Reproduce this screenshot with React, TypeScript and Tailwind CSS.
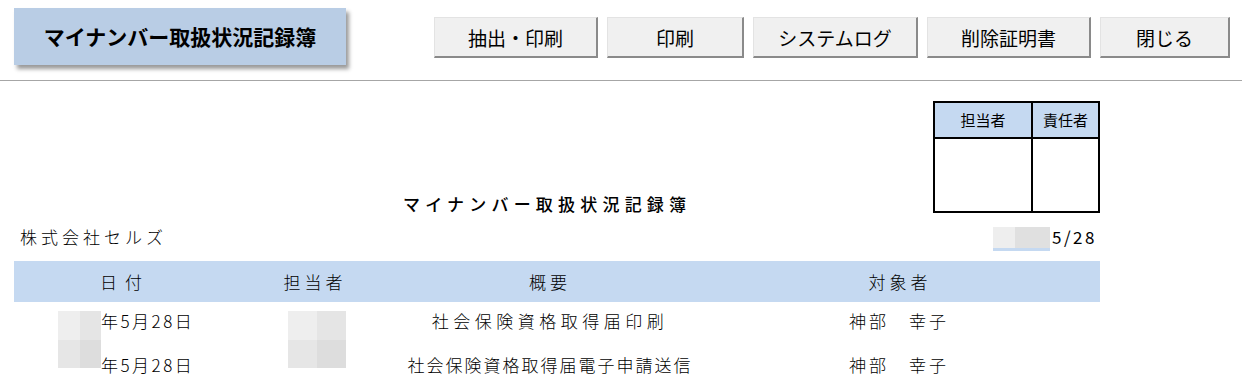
const jp = "font-['Noto_Sans_CJK_JP','Noto_Sans',sans-serif]";

const buttons = [
  { label: "抽出・印刷", w: "w-[164px]" },
  { label: "印刷", w: "w-[137px]" },
  { label: "システムログ", w: "w-[165px]" },
  { label: "削除証明書", w: "w-[164px]" },
  { label: "閉じる", w: "w-[130px]" },
];

const rows = [
  { summary: "社会保険資格取得届印刷", spacing: "tracking-[4.5px]", target: "神部　幸子" },
  { summary: "社会保険資格取得届電子申請送信", spacing: "tracking-[2px]", target: "神部　幸子" },
];

// pixelated block standing in for masked values, spans both rows
function Mosaic({ width }: { width: string }) {
  return (
    <div className={`row-span-2 mt-[12px] grid h-[57px] ${width} grid-cols-2 grid-rows-2 self-start`}>
      <div className="bg-[#eeeeee]" />
      <div className="bg-[#e5e5e5]" />
      <div className="bg-[#e6e6e6]" />
      <div className="bg-[#dddddd]" />
    </div>
  );
}

export default function App() {
  return (
    <div className={`h-[390px] w-[1242px] overflow-hidden bg-white text-black ${jp}`}>
      <header className="flex h-[81px] items-start border-b border-[#a6a6a6] pr-[12px]">
        <div className="ml-[14px] mt-[8px] flex h-[57px] w-[332px] items-center justify-center bg-[#b9cde5] text-[21px] font-bold shadow-[3px_4px_4px_rgba(0,0,0,0.4)]">
          マイナンバー取扱状況記録簿
        </div>
        <div className="ml-auto mt-[17px] flex gap-[9px]">
          {buttons.map((b) => (
            <button
              key={b.label}
              type="button"
              className={`${b.w} h-[41px] border border-t-[#e3e3e3] border-l-[#e3e3e3] border-r-[#8a8a8a] border-b-[#8a8a8a] border-r-2 border-b-2 bg-[#f0f0f0] text-[19px] leading-none`}
            >
              {b.label}
            </button>
          ))}
        </div>
      </header>

      <div className="w-[1100px]">
        <div className="mt-[20px] flex items-end">
          <div className="mb-[1px] pl-[403px] text-[17px] font-medium tracking-[5.2px] leading-none">
            マイナンバー取扱状況記録簿
          </div>
          <div className="ml-auto flex h-[112px] w-[167px] border-2 border-black">
            <div className="flex w-[98px] flex-col border-r-2 border-black">
              <div className="flex h-[36px] items-center justify-center border-b-2 border-black bg-[#c5d9f1] text-[15px]">
                担当者
              </div>
            </div>
            <div className="flex flex-1 flex-col">
              <div className="flex h-[36px] items-center justify-center border-b-2 border-black bg-[#c5d9f1] text-[15px]">
                責任者
              </div>
            </div>
          </div>
        </div>

        <div className="flex h-[48px] items-center pl-[20px] pr-[3px]">
          <span className="text-[17px] tracking-[4px] font-light">株式会社セルズ</span>
          <div className="ml-auto flex items-center">
            <div className="flex flex-col pt-[3px]">
              <div className="flex h-[21px]">
                <div className="w-[22px] bg-[#eeeeee]" />
                <div className="w-[35px] bg-[#e0e0e0]" />
              </div>
              <div className="h-[3px] w-[57px] bg-[#c5d9f1]" />
            </div>
            <span className="ml-[2px] text-[17px] tracking-[2.5px]">5/28</span>
          </div>
        </div>

        <div className="ml-[14px] grid h-[41px] grid-cols-[216px_170px_300px_1fr] items-center bg-[#c5d9f1] text-[17px] font-light">
          <div className="pl-[6px] text-center tracking-[8px]">日付</div>
          <div className="text-center tracking-[4px]">担当者</div>
          <div className="text-center tracking-[4px]">概要</div>
          <div className="text-center tracking-[4px]">対象者</div>
        </div>

        <div className="-mt-[3px] ml-[14px] grid grid-cols-[44px_43px_129px_170px_300px_1fr] grid-rows-[44px_44px] items-center text-[17px] font-light">
          <div className="row-span-2" />
          <Mosaic width="w-[43px]" />
          <div className="tracking-[2.5px]">年5月28日</div>
          <div className="row-span-2 flex justify-center self-start pl-[4px]">
            <Mosaic width="w-[58px]" />
          </div>
          <div className={`text-center ${rows[0].spacing}`}>{rows[0].summary}</div>
          <div className="pl-[149px] tracking-[3px]">{rows[0].target}</div>
          <div className="tracking-[2.5px]">年5月28日</div>
          <div className={`text-center ${rows[1].spacing}`}>{rows[1].summary}</div>
          <div className="pl-[149px] tracking-[3px]">{rows[1].target}</div>
        </div>
      </div>
    </div>
  );
}
